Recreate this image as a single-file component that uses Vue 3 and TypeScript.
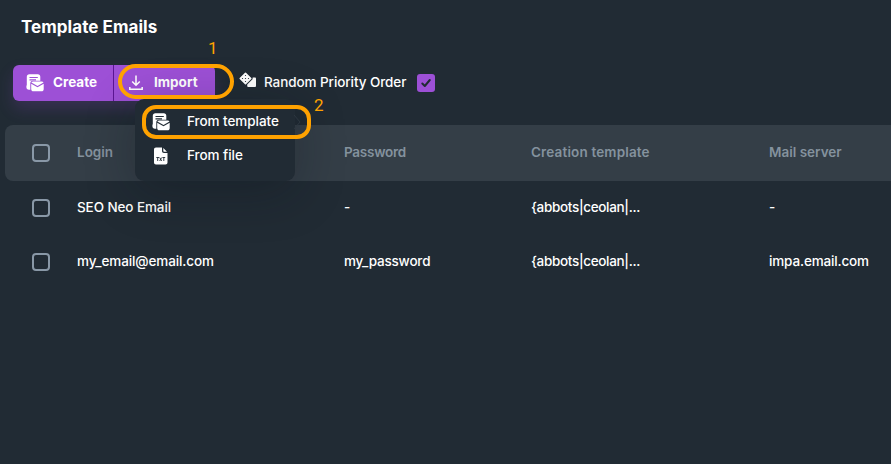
<script setup lang="ts">
import { ref } from 'vue'

interface Account {
  login: string
  password: string
  template: string
  server: string
}

const randomOrder = ref(true)
const rows: Account[] = [
  { login: 'SEO Neo Email', password: '-', template: '{abbots|ceolan|...', server: '-' },
  { login: 'my_email@email.com', password: 'my_password', template: '{abbots|ceolan|...', server: 'impa.email.com' },
]
</script>

<template>
  <main class="page">
    <h1><span class="title">Template Emails</span></h1>

    <div class="toolbar">
      <div class="buttons">
        <button class="create">
          <svg class="mail-icon" width="18" height="18" viewBox="0 0 18 18">
            <path fill="#fff" d="M.8 2.800C.8 1.200 1.800.3 3.300.3h8.500c1.600 0 2.500.9 2.500 2.500v4H7C5.300 6.800 4.300 7.700 4.300 9.300v6.500H3C1.300 15.800.4 14.900.4 13.300V11.500h.4z" />
            <path class="lines" d="M3.500 3.500h8.300M3.500 5.900h6.500" fill="none" stroke-width="1.200" />
            <path fill="#fff" d="M5.200 9.700 11.500 13.200 17.700 9.700V15c0 1.500-.8 2.300-2.200 2.300H7.400c-1.400 0-2.200-.8-2.200-2.300z" />
            <path fill="#fff" d="M5.400 8.500C5.700 7.900 6.400 7.600 7.200 7.600h8.500c.8 0 1.500.3 1.800.9l-6 3.400z" />
          </svg>
          <span>Create</span>
        </button>
        <button class="import">
          <svg width="14" height="16" viewBox="0 0 14 16" fill="none" stroke="#fff" stroke-width="1.500">
            <path d="M7 .500V10M3.200 6.500 7 10.300l3.800-3.800M.800 12v2.200h12.400V12" />
          </svg>
          <span>Import</span>
        </button>

        <div class="menu">
          <div class="item">
            <svg class="mail-icon dark" width="18" height="18" viewBox="0 0 18 18">
              <path fill="#fff" d="M.8 2.800C.8 1.200 1.800.3 3.300.3h8.500c1.600 0 2.500.9 2.500 2.500v4H7C5.300 6.800 4.300 7.700 4.300 9.300v6.500H3C1.300 15.800.4 14.900.4 13.300V11.500h.4z" />
              <path class="lines" d="M3.500 3.500h8.300M3.500 5.900h6.500" fill="none" stroke-width="1.200" />
              <path fill="#fff" d="M5.200 9.700 11.500 13.200 17.700 9.700V15c0 1.500-.8 2.300-2.200 2.300H7.400c-1.400 0-2.200-.8-2.200-2.300z" />
              <path fill="#fff" d="M5.400 8.500C5.700 7.900 6.400 7.600 7.200 7.600h8.500c.8 0 1.500.3 1.800.9l-6 3.400z" />
            </svg>
            <span>From template</span>
            <svg class="chevron" width="8" height="16" viewBox="0 0 8 16" fill="none" stroke="#2d3740">
              <path d="m1 1 6 7-6 7" />
            </svg>
          </div>
          <div class="item">
            <svg class="file-icon" width="18" height="18" viewBox="0 0 18 18">
              <path fill="#fff" d="M4 .500h6V4c0 1.200.8 2 2 2h3.500v9.500c0 1.200-.8 2-2 2H4c-1.200 0-2-.8-2-2v-13c0-1.200.8-2 2-2zM11.300 1l3.700 3.700h-2.700c-.6 0-1-.4-1-1z" />
              <path fill="none" stroke="#212b34" stroke-width=".9" d="M4.300 10.500h2.800M5.700 10.500V14M7.700 10.500l2 3.500M9.700 10.500l-2 3.500M10.400 10.500h2.800M11.800 10.500V14" />
            </svg>
            <span>From file</span>
          </div>
        </div>
        <div class="ring ring-import"></div>
        <div class="ring ring-template"></div>
        <b class="mark mark-one">1</b>
        <b class="mark mark-two">2</b>
      </div>

      <svg class="dice" width="18" height="17" viewBox="0 0 18 17">
        <path fill="#fff" stroke="#fff" stroke-width="1.500" stroke-linejoin="round" d="M6.500 1.200 11.800 6.500 6.500 11.800 1.200 6.500z" />
        <path fill="#fff" d="M13.700 5.500h2.100c.8 0 1.200.4 1.200 1.200v7c0 .8-.4 1.300-1.200 1.300H9.500c-.8 0-1.300-.5-1.300-1.300V12.500l5.300-5.200z" />
        <g fill="#212b34"><circle cx="6.500" cy="3.500" r=".6" /><circle cx="3.500" cy="6.500" r=".6" /><circle cx="6.500" cy="6.500" r=".6" /><circle cx="9.500" cy="6.500" r=".6" /><circle cx="6.500" cy="9.500" r=".6" /></g>
      </svg>
      <span class="random">Random Priority Order</span>
      <span class="toggle" @click="randomOrder = !randomOrder">
        <svg v-if="randomOrder" width="18" height="18" viewBox="0 0 18 18" fill="none" stroke="#212b34" stroke-width="2" stroke-linecap="round" stroke-linejoin="round">
          <path d="m5.300 9.500 2.500 2.500 5-6" />
        </svg>
      </span>
    </div>

    <section class="table">
      <div class="row head">
        <i class="box"></i>
        <span>Login</span>
        <span class="h-password">Password</span>
        <span class="h-template">Creation template</span>
        <span>Mail server</span>
      </div>
      <div v-for="row in rows" :key="row.login" class="row">
        <i class="box"></i>
        <span class="login">{{ row.login }}</span>
        <span class="password">{{ row.password }}</span>
        <span class="pattern">{{ row.template }}</span>
        <span class="server">{{ row.server }}</span>
      </div>
    </section>
  </main>
</template>

<style>
body { background: #212b34; overflow: hidden; }
</style>

<style scoped>
.page {
  box-sizing: border-box;
  width: 891px;
  height: 464px;
  overflow: hidden;
  background: #212b34;
  color: #fff;
  font: 500 13.5px/20px Inter, "Liberation Sans", sans-serif;
  white-space: nowrap;
}
h1 {
  margin: 0;
  padding: 14px 0 0 21px;
  height: 51px;
  font-size: 17px;
  line-height: 26px;
  font-weight: 700;
}
.title { letter-spacing: 0.05px; }
.toolbar {
  display: flex;
  align-items: center;
  height: 36px;
  padding-left: 13px;
}
.buttons {
  position: relative;
  z-index: 2;
  display: flex;
  width: 202px;
  height: 36px;
  border-radius: 6px;
  box-shadow: 0 8px 16px rgba(145, 72, 207, 0.2);
}
button {
  display: flex;
  align-items: center;
  height: 36px;
  padding: 0;
  border: 0;
  background: #9d50d6;
  color: #fff;
  font: 700 13.5px/20px Inter, sans-serif;
}
button span, .item span, .random, .row span { padding-bottom: 2px; }
.create {
  width: 101px;
  padding-left: 13px;
  gap: 9px;
  border-right: 1px solid #5c1694;
  border-radius: 6px 0 0 6px;
}
.import {
  width: 101px;
  padding-left: 15px;
  gap: 11px;
  border-radius: 0 6px 6px 0;
}
svg { flex: none; }
.lines { stroke: #9d50d6; }
.dark .lines { stroke: #212b34; }
.menu {
  position: absolute;
  left: 122px;
  top: 34px;
  box-sizing: border-box;
  width: 160px;
  height: 82px;
  padding: 6px 0 0 17px;
  border-radius: 9px;
  background: #212b34;
  box-shadow: 0 10px 50px rgba(10, 16, 24, 0.3);
}
.item {
  display: flex;
  align-items: center;
  gap: 17px;
  height: 34px;
}
.item span { letter-spacing: -0.05px; }
.chevron { margin-left: -3px; }
.ring {
  position: absolute;
  box-sizing: border-box;
  border: 4px solid #ffa200;
}
.ring-import { left: 105px; top: -1px; width: 116px; height: 35px; border-radius: 18px; }
.ring-template { left: 129px; top: 40px; width: 169px; height: 34px; border-radius: 14px; }
.mark {
  position: absolute;
  color: #ffa200;
  font: 400 17px/20px Roboto, sans-serif;
}
.mark-one { left: 195px; top: -27px; }
.mark-two { left: 301px; top: 30px; }
.dice { margin: -5px 7px 0 24px; }
.random { width: 142px; letter-spacing: -0.08px; }
.toggle {
  width: 18px;
  height: 18px;
  margin-left: 11px;
  border-radius: 3px;
  background: #9d50d6;
}
.toggle svg { display: block; }
.table {
  margin: 24px 0 0 5px;
}
.row {
  display: grid;
  grid-template-columns: 45px 267px 187px 238px auto;
  align-items: center;
  height: 54px;
  padding-left: 27px;
}
.head {
  height: 56px;
  border-radius: 8px 0 0 8px;
  background: #343e47;
  color: #84929e;
  font-weight: 600;
}
.h-password { letter-spacing: -0.25px; }
.h-template { letter-spacing: 0.15px; }
.login { letter-spacing: -0.1px; }
.password { letter-spacing: -0.18px; }
.pattern { letter-spacing: -0.33px; }
.server { letter-spacing: -0.15px; }
.box {
  box-sizing: border-box;
  width: 18px;
  height: 18px;
  border: 2px solid #8998a7;
  border-radius: 4px;
}
</style>
